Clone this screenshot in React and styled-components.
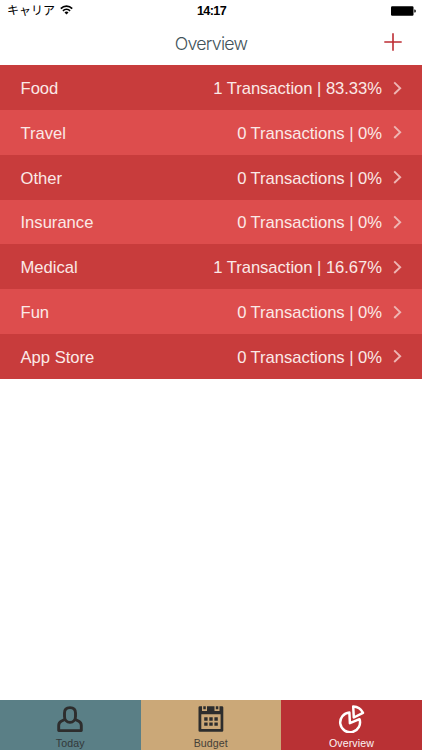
import React from 'react';
import styled, { createGlobalStyle } from 'styled-components';

const GlobalStyle = createGlobalStyle`
  * {
    box-sizing: border-box;
  }

  body {
    margin: 0;
    background: #fff;
    font-family: "Liberation Sans", "Noto Sans CJK JP", sans-serif;
  }
`;

const Screen = styled.div`
  display: flex;
  flex-direction: column;
  width: 422px;
  height: 750px;
  overflow: hidden;
  background: #fff;
`;

const StatusBar = styled.div`
  display: grid;
  grid-template-columns: 1fr auto 1fr;
  align-items: center;
  height: 21px;
  padding: 0 6px 0 7px;
  color: #000;
`;

const Carrier = styled.div`
  display: flex;
  align-items: center;
  gap: 5px;
  padding-bottom: 1px;
  font-family: "Noto Sans CJK JP", sans-serif;
  font-size: 12px;
  line-height: 20px;
`;

const Clock = styled.div`
  font-size: 12.6px;
  font-weight: bold;
  letter-spacing: -0.6px;
`;

const Battery = styled.svg`
  justify-self: end;
`;

const NavBar = styled.header`
  display: grid;
  grid-template-columns: 1fr auto 1fr;
  align-items: center;
  height: 44.2px;
  padding: 0 20px;
`;

const Title = styled.h1`
  grid-column: 2;
  margin: 0;
  font-family: Inter, "Liberation Sans", sans-serif;
  font-size: 17.8px;
  font-weight: 300;
  letter-spacing: -0.75px;
  color: #42535a;
`;

const AddButton = styled.button`
  justify-self: end;
  display: flex;
  padding: 0 0 3px;
  border: 0;
  background: none;
  color: #bd2c33;
`;

const List = styled.ul`
  flex: 1;
  margin: 0;
  padding: 0;
  list-style: none;
`;

const Row = styled.li`
  display: flex;
  align-items: center;
  height: 44.8px;
  padding: 0 20.5px;
  background: ${({ $dark }) => ($dark ? '#c83c3c' : '#dd4d4d')};
  color: #fbe9e7;
  font-size: 16.6px;
`;

const Name = styled.span`
  flex: 1;
  padding-top: 3px;
`;

const Detail = styled.span`
  margin-right: 10.5px;
  padding-top: 3px;
  letter-spacing: -0.03px;
`;

const TabBar = styled.nav`
  display: grid;
  grid-template-columns: 140.5px 140.5px 141px;
  height: 50.5px;
`;

const Tab = styled.a`
  display: flex;
  flex-direction: column;
  align-items: center;
  padding-top: 4px;
  background: ${({ $bg }) => $bg};
  color: ${({ $active }) => ($active ? '#fff' : '#2d2d2d')};
`;

const TabLabel = styled.span`
  margin-top: 4px;
  font-size: 10.6px;
  line-height: 13px;
  letter-spacing: 0.1px;
  opacity: ${({ $active }) => ($active ? 0.95 : 0.85)};
`;

const WifiIcon = () => (
  <svg width="13" height="10" viewBox="0 0 13 10" fill="none" stroke="currentColor">
    <path d="M0.8 3.6C4 0.4 9 0.4 12.2 3.6" strokeWidth="1.7" />
    <path d="M2.9 5.8C5 3.8 8 3.8 10.1 5.8" strokeWidth="1.6" />
    <path d="M6.5 9.4L4.5 7.4C5.6 6.3 7.4 6.3 8.5 7.4Z" fill="currentColor" stroke="none" />
  </svg>
);

const BatteryIcon = () => (
  <Battery width="25" height="10" viewBox="0 0 25 10">
    <rect x="0" y="0.3" width="22.5" height="9.4" rx="1.2" />
    <path d="M23.3 3.5h0.6a0.9 1.5 0 0 1 0 3h-0.6z" />
  </Battery>
);

const PlusIcon = () => (
  <svg width="18" height="18" viewBox="0 0 18 18" stroke="currentColor" strokeWidth="1.6">
    <path d="M9 0.3V17.7M0.3 9H17.7" />
  </svg>
);

const Chevron = () => (
  <svg width="9" height="14" viewBox="0 0 9 14" fill="none" stroke="#eeb5b3" strokeWidth="1.9">
    <path d="M1.2 1.4L7.2 7.2L1.2 13" />
  </svg>
);

const PersonIcon = () => (
  <svg width="28" height="29" viewBox="0 0 28 29" fill="none" stroke="currentColor" strokeWidth="2.9" strokeLinejoin="round">
    <path d="M8.5 8.9C8.5 5.4 10.6 3.6 14 3.6S19.5 5.4 19.5 8.9V12.5C19.5 15.6 17.3 18.4 14 18.4S8.5 15.6 8.5 12.5Z" />
    <path d="M9.2 15.2L5.2 17.2C3.3 18.2 2.7 19.4 2.7 21.5V26.6H25.3V21.5C25.3 19.4 24.7 18.2 22.8 17.2L18.8 15.2" />
  </svg>
);

const CalendarIcon = () => (
  <svg width="28" height="29" viewBox="0 0 28 29" fill="currentColor">
    <path fillRule="evenodd" d="M1.5 3.5Q1.5 2.2 2.8 2.2H5V7H10V2.2H17.5V7H22.5V2.2H25Q26.3 2.2 26.3 3.5V26.5Q26.3 27.8 25 27.8H2.8Q1.5 27.8 1.5 26.5ZM4.3 10.2V25H23.6V10.2Z" />
    <path d="M6.3 2.2H8.8V5.2H6.3ZM18.8 2.2H21.3V5.2H18.8Z" />
    <path d="M7.2 13.3h3.4v3.4h-3.4zM12.3 13.3h3.4v3.4h-3.4zM17.4 13.3h3.4v3.4h-3.4zM7.2 18.4h3.4v3.4h-3.4zM12.3 18.4h3.4v3.4h-3.4zM17.4 18.4h3.4v3.4h-3.4z" />
  </svg>
);

const PieIcon = () => (
  <svg width="28" height="29" viewBox="0 0 28 29" fill="none" stroke="currentColor" strokeWidth="2.5" strokeLinejoin="round">
    <path d="M11.4 8.5A9.9 9.9 0 1 0 21.5 15.2L11.9 19.2Z" />
    <path d="M15.2 2.5C19.6 2.7 23.1 4.9 25 8.9L15.8 13.5Z" />
  </svg>
);

const categories = [
  { name: 'Food', count: 1, share: '83.33%' },
  { name: 'Travel', count: 0, share: '0%' },
  { name: 'Other', count: 0, share: '0%' },
  { name: 'Insurance', count: 0, share: '0%' },
  { name: 'Medical', count: 1, share: '16.67%' },
  { name: 'Fun', count: 0, share: '0%' },
  { name: 'App Store', count: 0, share: '0%' },
];

const tabs = [
  { label: 'Today', bg: '#5a7f86', Icon: PersonIcon },
  { label: 'Budget', bg: '#cba878', Icon: CalendarIcon },
  { label: 'Overview', bg: '#b93134', Icon: PieIcon, active: true },
];

export default function App() {
  return (
    <Screen>
      <GlobalStyle />
      <StatusBar>
        <Carrier>キャリア <WifiIcon /></Carrier>
        <Clock>14:17</Clock>
        <BatteryIcon />
      </StatusBar>
      <NavBar>
        <Title>Overview</Title>
        <AddButton aria-label="Add"><PlusIcon /></AddButton>
      </NavBar>
      <List>
        {categories.map(({ name, count, share }, i) => (
          <Row key={name} $dark={i % 2 === 0}>
            <Name>{name}</Name>
            <Detail>{`${count} ${count === 1 ? 'Transaction' : 'Transactions'} | ${share}`}</Detail>
            <Chevron />
          </Row>
        ))}
      </List>
      <TabBar>
        {tabs.map(({ label, bg, Icon, active }) => (
          <Tab key={label} $bg={bg} $active={active}>
            <Icon />
            <TabLabel $active={active}>{label}</TabLabel>
          </Tab>
        ))}
      </TabBar>
    </Screen>
  );
}
